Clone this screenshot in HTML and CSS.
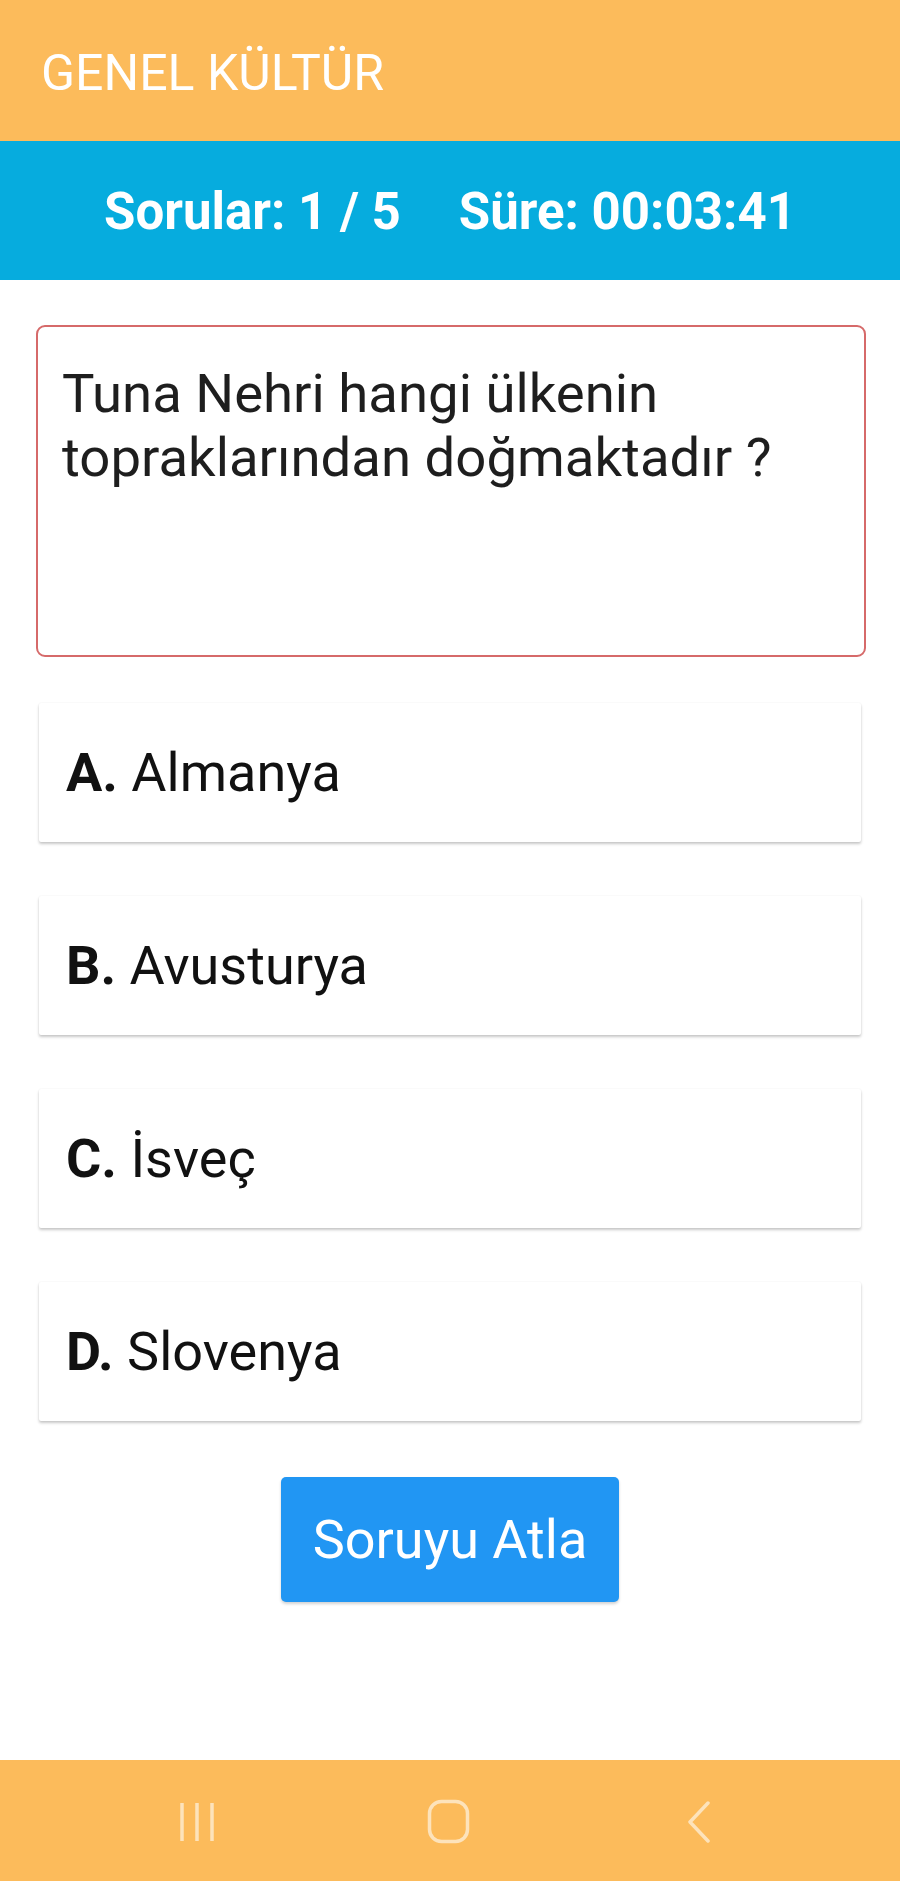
FILE: index.html
```html
<!DOCTYPE html>
<html lang="tr">
<head>
<meta charset="utf-8">
<title>Genel Kültür</title>
<link rel="stylesheet" href="styles.css">
</head>
<body>
<div class="screen">
  <header class="appbar">GENEL KÜLTÜR</header>
  <div class="stats">
    <span class="stat">Sorular: 1 / 5</span>
    <span class="stat">Süre: 00:03:41</span>
  </div>
  <main class="content">
    <div class="question">Tuna Nehri hangi ülkenin topraklarından doğmaktadır ?</div>
    <div class="options">
      <div class="option"><b>A.</b> Almanya</div>
      <div class="option"><b>B.</b> Avusturya</div>
      <div class="option"><b>C.</b> İsveç</div>
      <div class="option"><b>D.</b> Slovenya</div>
    </div>
    <div class="actions">
      <button class="skip">Soruyu Atla</button>
    </div>
  </main>
  <nav class="navbar">
    <svg class="nav-icon" width="40" height="42" viewBox="0 0 40 42"><g stroke="#fde3bb" stroke-width="3.5" fill="none"><line x1="4" y1="2" x2="4" y2="40"/><line x1="19" y1="2" x2="19" y2="40"/><line x1="34" y1="2" x2="34" y2="40"/></g></svg>
    <svg class="nav-icon home" width="43" height="45" viewBox="0 0 43 45"><rect x="2.5" y="2.5" width="38" height="40" rx="12" stroke="#fde3bb" stroke-width="3.5" fill="none"/></svg>
    <svg class="nav-icon" width="26" height="42" viewBox="0 0 26 42"><polyline points="22,2 4,21 22,40" stroke="#fde3bb" stroke-width="3.5" fill="none" stroke-linecap="round" stroke-linejoin="round"/></svg>
  </nav>
</div>
</body>
</html>
```
FILE: styles.css
```css
* { box-sizing: border-box; }
html, body { margin: 0; padding: 0; background: #ffffff; }
body { font-family: Roboto, "Noto Sans", "Liberation Sans", sans-serif; }
.screen { min-height: 1881px; display: flex; flex-direction: column; }
.appbar {
  height: 141px;
  background: #fcbb5b;
  color: #ffffff;
  font-size: 50px;
  display: flex;
  align-items: center;
  padding-left: 41px;
  padding-top: 4px;
}
.stats {
  height: 139px;
  background: #06acde;
  color: #ffffff;
  font-weight: bold;
  font-size: 51px;
  display: flex;
  align-items: center;
  justify-content: center;
  gap: 58px;
  padding-top: 2px;
}
.content { padding: 45px 34px 0 36px; }
.question {
  height: 332px;
  border: 2px solid #d66a6a;
  border-radius: 9px;
  padding: 34px 24px 0 24px;
  font-size: 54.5px;
  line-height: 64px;
  color: #1e1e1e;
}
.options {
  display: flex;
  flex-direction: column;
  gap: 54px;
  margin: 46px 5px 0 3px;
}
.option {
  height: 139px;
  background: #ffffff;
  box-shadow: 0 2px 3px rgba(0,0,0,0.22), 0 0 2px rgba(0,0,0,0.06);
  border-radius: 2px;
  display: flex;
  align-items: center;
  padding-left: 27px;
  font-size: 54px;
  color: #111111;
  white-space: pre;
}
.option b { font-weight: bold; }
.actions { display: flex; justify-content: center; margin-top: 56px; }
.skip {
  width: 338px;
  height: 125px;
  background: #2196f3;
  color: #ffffff;
  border: none;
  border-radius: 5px;
  font-family: Roboto, "Noto Sans", "Liberation Sans", sans-serif;
  font-size: 54px;
  box-shadow: 0 2px 3px rgba(0,0,0,0.18);
  padding: 0;
  margin-left: -2px;
}
.navbar {
  margin-top: auto;
  height: 121px;
  background: #fcbb5b;
  display: flex;
  align-items: center;
  justify-content: space-between;
  padding: 2px 188px 0 178px;
}
.nav-icon { display: block; }
.home { margin-right: 8px; }
```
